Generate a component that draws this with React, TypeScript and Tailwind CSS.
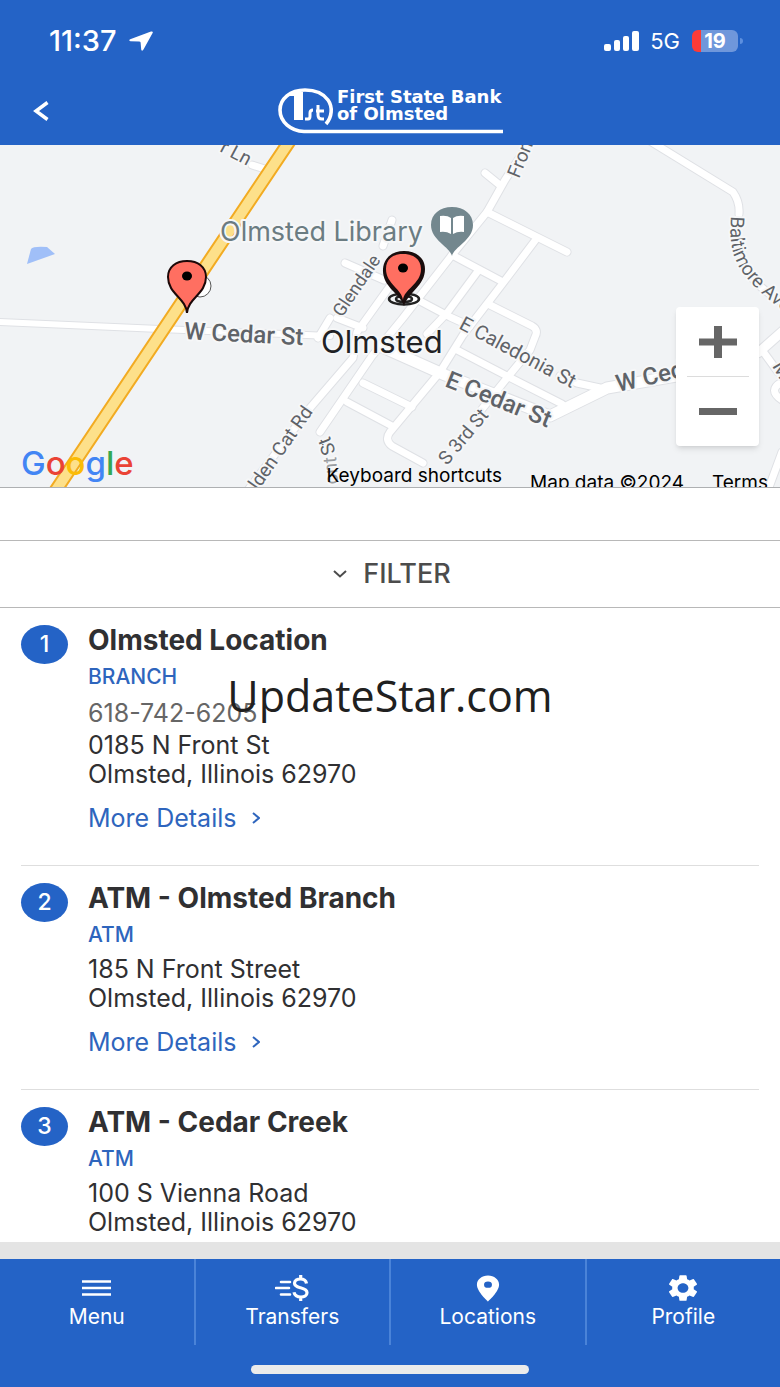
import type { ReactNode } from "react";
import { MdLocationOn, MdSettings } from "react-icons/md";

interface BankLocation {
  id: number;
  name: string;
  type: string;
  phone?: string;
  street: string;
  city: string;
}

const locations: BankLocation[] = [
  {
    id: 1,
    name: "Olmsted Location",
    type: "BRANCH",
    phone: "618-742-6205",
    street: "0185 N Front St",
    city: "Olmsted, Illinois 62970",
  },
  {
    id: 2,
    name: "ATM - Olmsted Branch",
    type: "ATM",
    street: "185 N Front Street",
    city: "Olmsted, Illinois 62970",
  },
  {
    id: 3,
    name: "ATM - Cedar Creek",
    type: "ATM",
    street: "100 S Vienna Road",
    city: "Olmsted, Illinois 62970",
  },
];

// minor streets, drawn twice: a grey casing and a white fill
const streets = [
  "M531 140L505 180L487 212L452 255L403 318L372 356L320 432",
  "M485 173L501 186",
  "M487 212L567 252",
  "M452 255L503 282",
  "M537 238L503 283L463 335L440 372L390 432Q384 440 392 446L423 463",
  "M478 271L447 313L427 334",
  "M392 220L383 246",
  "M345 263L384 280",
  "M390 286L357 332L353 358L310 408L248 490",
  "M330 318L318 338",
  "M337 318L363 328",
  "M403 292L450 317L470 326",
  "M490 305L532 326Q539 330 535 337L530 350L507 378L478 414",
  "M457 350L507 376L562 404",
  "M363 383L412 407",
  "M347 402L392 426",
  "M560 376L577 383L600 388",
  "M252 165L268 170",
  "M650 141L733 192Q740 202 739 214",
  "M744 268Q760 290 782 302",
  "M762 350L778 372M782 382Q767 390 782 400M782 452L768 490",
];

const mainRoads = [
  { d: "M-2 322L160 329L330 336", width: 6 },
  { d: "M380 346L445 375L550 416L607 388L676 376", width: 11 },
  { d: "M758 353L784 330", width: 9 },
];

function Logo() {
  return (
    <svg className="h-12 w-[228px]" viewBox="0 0 228 48" role="img" aria-label="First State Bank of Olmsted">
      <path
        d="M50 37C56 30 57 20 52 13C47 6 38 3 29 3C14 3 4 12 4 23C4 35 15 44 28 44.5H227"
        fill="none"
        stroke="white"
        strokeWidth="3.6"
      />
      <path d="M17 5H27V33H18V9H13Z" fill="white" />
      <path d="M29 32H32Q34 32 34 29V26Q34 23 37 23" fill="none" stroke="white" strokeWidth="3" />
      <path d="M42 18V28Q42 32 46 32H48M40 24H48" fill="none" stroke="white" strokeWidth="3" />
      <g fill="white" fontSize="18" fontWeight="700" className="font-['DejaVu_Sans',sans-serif]">
        <text x="61" y="16">First State Bank</text>
        <text x="61" y="33">of Olmsted</text>
      </g>
    </svg>
  );
}

function StatusBar() {
  return (
    <div className="flex h-[82px] items-center justify-between pl-[49px] pr-[37px]">
      <div className="flex items-center gap-3">
        <span className="text-[29px] font-medium leading-8">11:37</span>
        <svg className="h-5 w-6" viewBox="0 0 24 20" fill="white">
          <path d="M22 0.5Q24.4 0 23.6 2L14.5 18.6Q13 20.8 12.2 18.4L11.6 11.6Q11.5 10.6 10 10.5L1.4 10.2Q-0.8 9.4 1.2 8.3Z" />
        </svg>
      </div>
      <div className="flex items-center gap-2">
        <svg className="h-5 w-9" viewBox="0 0 36 20" fill="white">
          <rect x="0" y="13" width="7" height="7" rx="2" />
          <rect x="10" y="9" width="6" height="11" rx="2" />
          <rect x="19" y="5" width="6" height="15" rx="2" />
          <rect x="28" y="0" width="7" height="20" rx="2" />
        </svg>
        <span className="pl-0.5 text-[22px] leading-8">5G</span>
        <div className="flex items-center gap-0.5 pl-1">
          <div className="flex h-[22px] w-[46px] items-center justify-center rounded-md bg-linear-to-r from-[#fb3b37] from-20% to-[#6f97db] to-20% text-[20px] font-bold leading-5">
            19
          </div>
          <span className="h-1.5 w-[3px] rounded-r bg-[#5c8fdf]" />
        </div>
      </div>
    </div>
  );
}

function MapDrawing() {
  return (
    <svg className="h-full w-full" viewBox="0 145 780 342" preserveAspectRatio="xMidYMid slice">
      <rect y="145" width="780" height="343" fill="#f1f3f5" />
      <path d="M27 264L31 249Q33 246 47 247L55 254Z" fill="#a0bff8" />
      <g fill="none" strokeLinecap="round" strokeLinejoin="round">
        <g stroke="#dfe1e5">
          {streets.map((d) => (
            <path key={d} d={d} strokeWidth="9" />
          ))}
          {mainRoads.map((road) => (
            <path key={road.d} d={road.d} strokeWidth={road.width + 2} />
          ))}
        </g>
        <g stroke="white">
          {streets.map((d) => (
            <path key={d} d={d} strokeWidth="7" />
          ))}
          {mainRoads.map((road) => (
            <path key={road.d} d={road.d} strokeWidth={road.width} />
          ))}
        </g>
        <path d="M293 136L50 499" stroke="#f2ab22" strokeWidth="14" />
        <path d="M293 136L50 499" stroke="#fde08a" strokeWidth="10" />
      </g>

      <g
        fill="#5f6368"
        stroke="#f6f7f8"
        strokeWidth="4"
        paintOrder="stroke"
        strokeLinejoin="round"
        fontSize="19"
        className="font-[Roboto,sans-serif]"
      >
        <text transform="translate(219 151) rotate(28)">r Ln</text>
        <text transform="translate(519 179) rotate(-68)">Fron</text>
        <text transform="translate(342 318) rotate(-56)" fontSize="18">Glendale</text>
        <text transform="translate(458 328) rotate(28)" fontSize="20">E Caledonia St</text>
        <text transform="translate(258 491) rotate(-55)">lden Cat Rd</text>
        <text transform="translate(447 466) rotate(-50)">S 3rd St</text>
        <text transform="translate(338 484) rotate(-94)" fill="#9a9da1">ont</text>
        <text transform="translate(336 452) rotate(-112)">St</text>
        <text transform="translate(772 366) rotate(60)">M</text>
        <g fontSize="24" fontWeight="500">
          <text transform="translate(184 339) rotate(3)">W Cedar St</text>
          <text transform="translate(444 386) rotate(22)">E Cedar St</text>
          <text transform="translate(618 392) rotate(-13)">W Cedar</text>
        </g>
        <path id="baltimore" d="M731 216C727 262 742 280 790 316" stroke="none" fill="none" />
        <text>
          <textPath href="#baltimore">Baltimore Ave</textPath>
        </text>
      </g>
      <g stroke="#f6f7f8" strokeWidth="4" paintOrder="stroke" strokeLinejoin="round" className="font-[Inter,sans-serif]">
        <text x="220" y="241" fontSize="27" fill="#6b7c82">Olmsted Library</text>
        <text x="321" y="353" fontSize="31" fill="#202124">Olmsted</text>
      </g>

      <path d="M452 256C450 247 431 240 431 225C431 214 440 207 452 207C464 207 473 214 473 225C473 240 454 247 452 256Z" fill="#73878e" />
      <path d="M440 216Q447 215 451 218V234Q446 231 440 232ZM464 216Q457 215 453 218V234Q458 231 464 232Z" fill="white" />

      <circle cx="200" cy="286" r="11" fill="white" stroke="#555" />
      <path
        d="M187 313C186 298 168 294 168 277C168 267 176 261 187 261C198 261 206 267 206 277C206 294 188 298 187 313Z"
        fill="#ff6f61"
        stroke="#1c0808"
        strokeWidth="2"
      />
      <ellipse cx="187" cy="276" rx="5" ry="4.5" />

      <ellipse cx="404" cy="299" rx="15" ry="5.5" fill="none" stroke="#222" strokeWidth="2.5" />
      <ellipse cx="404" cy="299" rx="8" ry="3" fill="none" stroke="#222" strokeWidth="2.5" />
      <path d="M404 306C400 293 382 287 383 269C384 257 393 251 404 251C416 251 425 258 425 269C425 286 409 291 404 306Z" fill="#1a0d0d" />
      <path d="M403 300C402 289 386 284 386 269C386 259 393 254 403 254C413 254 421 259 421 269C421 284 404 289 403 300Z" fill="#ff6f61" />
      <ellipse cx="403" cy="268" rx="5" ry="4.5" />
    </svg>
  );
}

function MapPanel() {
  return (
    <section className="relative h-[343px] shrink-0 overflow-hidden border-b border-[#aeb0b2] text-black">
      <MapDrawing />
      <div className="absolute bottom-0 left-[21px] text-[33px] font-medium leading-12">
        <span className="text-[#4285f4]">G</span>
        <span className="text-[#ea4335]">o</span>
        <span className="text-[#fbbc05]">o</span>
        <span className="text-[#4285f4]">g</span>
        <span className="text-[#34a853]">l</span>
        <span className="text-[#ea4335]">e</span>
      </div>
      <div className="absolute right-[21px] top-[162px] flex w-[83px] flex-col items-center rounded bg-white shadow-md">
        <button type="button" aria-label="Zoom in" className="flex h-[69px] w-full items-center justify-center">
          <svg className="h-8 w-[38px]" viewBox="0 0 38 32" fill="#666">
            <path d="M15 0H23V12.5H38V19.5H23V32H15V19.5H0V12.5H15Z" />
          </svg>
        </button>
        <div className="h-px w-[62px] bg-[#dcdcdc]" />
        <button type="button" aria-label="Zoom out" className="flex h-[69px] w-full items-center justify-center">
          <span className="h-[7px] w-[38px] bg-[#666]" />
        </button>
      </div>
      <div className="absolute right-3 top-[321px] flex items-start gap-7 text-[19px] leading-5">
        <button type="button">Keyboard shortcuts</button>
        <span className="pt-[7px]">Map data ©2024</span>
        <a href="#terms" className="pt-[7px]">Terms</a>
      </div>
    </section>
  );
}

function LocationItem({ location }: { location: BankLocation }) {
  return (
    <li className="mx-[21px] flex gap-5 border-b border-[#dedede] pb-8 pt-[14px] text-[#303032]">
      <div className="mt-[3px] flex h-[39px] w-[47px] shrink-0 items-center justify-center rounded-[50%] bg-[#2463c6] text-[23px] font-medium text-white">
        {location.id}
      </div>
      <div>
        <h2 className="text-[28px] font-bold leading-9">{location.name}</h2>
        <p className="text-[21px] font-medium leading-[38px] text-[#2e65bd]">{location.type}</p>
        {location.phone && (
          <p className="text-[25px] leading-[34px] text-[#666]">{location.phone}</p>
        )}
        <address className="mt-px text-[25px] not-italic leading-[29px]">
          {location.street}
          <br />
          {location.city}
        </address>
        <a href="#details" className="mt-[14px] flex items-center gap-4 text-[25px] leading-[30px] text-[#2e65bd]">
          More Details
          <svg className="h-3 w-2" viewBox="0 0 8 12" fill="none" stroke="currentColor" strokeWidth="2">
            <path d="M1 1L7 6L1 11" />
          </svg>
        </a>
      </div>
    </li>
  );
}

function Tab({ label, children }: { label: string; children: ReactNode }) {
  return (
    <a href="#tab" className="flex h-[86px] flex-1 flex-col items-center border-r-2 border-[#4a83d8] pt-3 last:border-r-0">
      <span className="flex h-[34px] items-center">{children}</span>
      <span className="text-[21px] leading-6">{label}</span>
    </a>
  );
}

export default function App() {
  return (
    <div className="relative flex h-screen flex-col overflow-hidden bg-white font-[Inter,sans-serif]">
      <header className="h-[145px] shrink-0 bg-[#2463c6] text-white">
        <StatusBar />
        <div className="grid grid-cols-[1fr_auto_1fr] items-center pt-[5px]">
          <button type="button" aria-label="Back" className="ml-[33px] w-4">
            <svg className="h-5 w-4" viewBox="0 0 16 20" fill="none" stroke="white" strokeWidth="3.5">
              <path d="M14.5 1.5L3 10L14.5 18.5" />
            </svg>
          </button>
          <Logo />
        </div>
      </header>

      <MapPanel />

      <div className="h-[53px] shrink-0 border-b border-[#b8b8b8]" />
      <button
        type="button"
        className="flex h-[67px] shrink-0 items-center justify-center gap-4 border-b border-[#b8b8b8] pl-1 text-[27px] font-medium text-[#4c4c4c]"
      >
        <svg className="h-2 w-[14px]" viewBox="0 0 14 8" fill="none" stroke="currentColor" strokeWidth="2">
          <path d="M1 1L7 6.5L13 1" />
        </svg>
        FILTER
      </button>

      <ul className="min-h-0 flex-1 overflow-hidden">
        {locations.map((location) => (
          <LocationItem key={location.id} location={location} />
        ))}
      </ul>

      <div className="h-[17px] shrink-0 bg-[#e4e4e4]" />
      <nav className="h-32 shrink-0 bg-[#2463c6] text-white">
        <div className="flex">
          <Tab label="Menu">
            <svg className="h-4 w-[29px]" viewBox="0 0 29 16" stroke="white" strokeWidth="2.4">
              <path d="M0 1.5H29M0 8H29M0 14.5H29" />
            </svg>
          </Tab>
          <Tab label="Transfers">
            <svg className="h-[26px] w-[34px]" viewBox="0 0 34 26" fill="none" stroke="white">
              <path d="M6 7H15M1 13H14M6 19.5H15" strokeWidth="2.6" strokeLinecap="round" />
              <path
                d="M31.5 8.5C31 5.5 28.5 4 25.5 4C22 4 19.5 5.7 19.5 8.3C19.5 11.3 22.5 12 25.5 12.8C29 13.7 32 14.7 32 17.7C32 20.5 29.3 22 26 22C22.5 22 19.6 20.5 19 17.3M25.7 0V4M25.7 22V26"
                strokeWidth="3.2"
              />
            </svg>
          </Tab>
          <Tab label="Locations">
            <MdLocationOn className="h-[31px] w-[38px]" preserveAspectRatio="none" />
          </Tab>
          <Tab label="Profile">
            <MdSettings className="h-8 w-9" preserveAspectRatio="none" />
          </Tab>
        </div>
        <div className="mx-auto mt-5 h-[9px] w-[278px] rounded-full bg-[#ebebeb]" />
      </nav>

      <div className="pointer-events-none absolute left-1/2 top-[664px] -translate-x-1/2 font-['Open_Sans',sans-serif] text-[43px] leading-[64px] text-[#202020]">
        UpdateStar.com
      </div>
    </div>
  );
}
